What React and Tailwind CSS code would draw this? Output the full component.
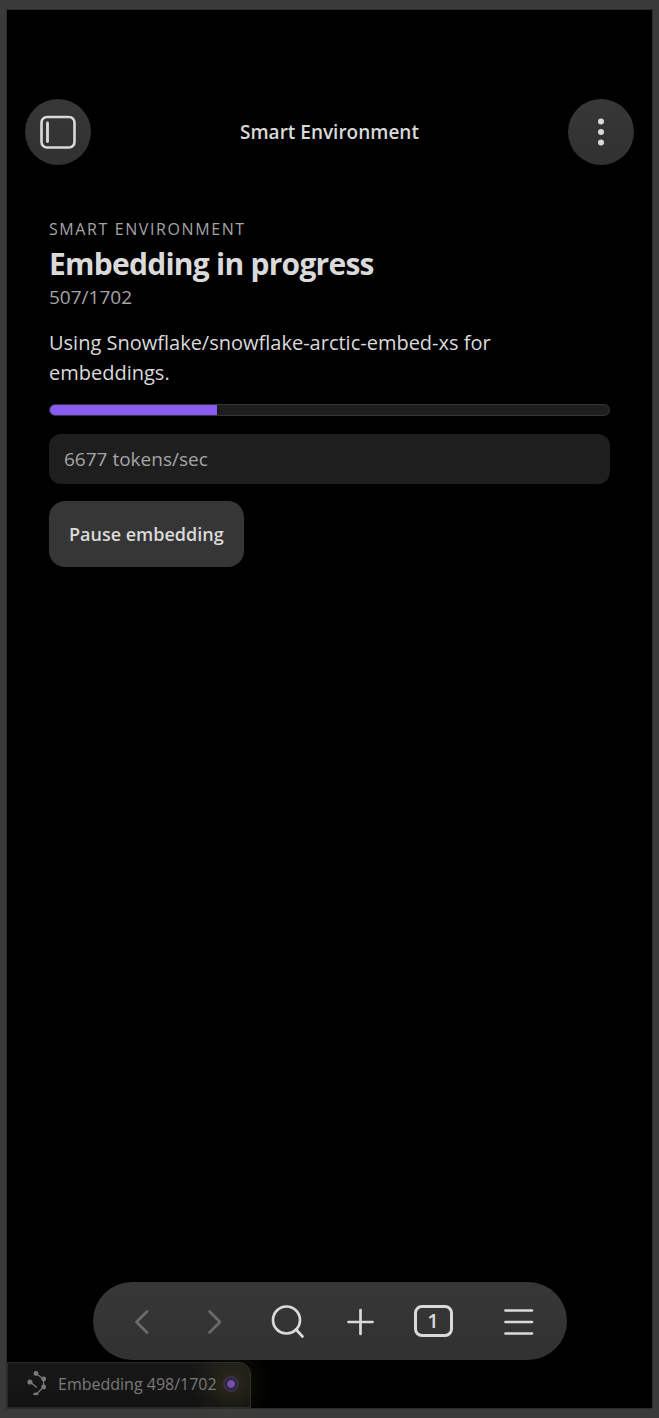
import React, { useState } from 'react';

const DONE = 507;
const TOTAL = 1702;

const SidebarIcon = () => (
    <svg width="36" height="34" viewBox="0 0 36 34" fill="none" stroke="currentColor" aria-hidden="true">
        <rect x="1.5" y="2" width="33" height="30.5" rx="5.5" strokeWidth="2.6" />
        <path d="M7.5 8v18.5" strokeWidth="2.8" strokeLinecap="round" />
    </svg>
);

const DotsIcon = () => (
    <svg width="6" height="28" viewBox="0 0 6 28" fill="currentColor" aria-hidden="true">
        <circle cx="3" cy="3.5" r="3" />
        <circle cx="3" cy="14" r="3" />
        <circle cx="3" cy="24.5" r="3" />
    </svg>
);

const GraphIcon = () => (
    <svg width="20" height="26" viewBox="0 0 20 26" fill="currentColor" stroke="currentColor" aria-hidden="true">
        <path d="M9 2.5 16.5 8v8L8.5 24M3 11l7 5.5" fill="none" strokeWidth="1.3" />
        <circle cx="9" cy="2.5" r="2.4" stroke="none" />
        <circle cx="16.7" cy="8" r="2.4" stroke="none" />
        <circle cx="3" cy="11" r="2.6" stroke="none" />
        <circle cx="16.7" cy="16" r="2.4" stroke="none" />
        <path d="M6.2 24a2.6 2.6 0 0 1 5.2 0z" stroke="none" />
    </svg>
);

const NavIcon = ({ children }) => (
    <svg width="40" height="40" viewBox="0 0 40 40" fill="none" stroke="currentColor" strokeWidth="2.7" strokeLinecap="round" strokeLinejoin="round" aria-hidden="true">
        {children}
    </svg>
);

const roundButton = 'flex size-[66px] items-center justify-center rounded-full bg-linear-to-b from-[#373737] to-[#313131]';
const navButton = 'flex w-[73px] items-center justify-center';

const App = () => {
    const [paused, setPaused] = useState(false);

    return (
        <div className="flex min-h-screen flex-col bg-[#3a3a3a] px-[7px] py-[10px] font-['Open_Sans','Noto_Sans',sans-serif] text-[#dadada]">
            <div className="flex flex-1 flex-col bg-black outline outline-[#2c2c2c]">
                <header className="flex items-center justify-between px-[18px] pt-[89px]">
                    <button type="button" aria-label="Toggle sidebar" className={roundButton}><SidebarIcon /></button>
                    <h1 className="text-[19px] font-semibold">Smart Environment</h1>
                    <button type="button" aria-label="More options" className={roundButton}><DotsIcon /></button>
                </header>

                <main className="flex flex-col px-[42px] pt-[53px]">
                    <p className="text-[16px] leading-[22px] tracking-widest text-[#a5a5a5] uppercase">Smart Environment</p>
                    <h2 className="text-[30px] leading-[48px] font-bold tracking-tight">Embedding in progress</h2>
                    <p className="text-[19px] leading-[18px] text-[#a5a5a5]">{DONE}/{TOTAL}</p>
                    <p className="mt-[22px] text-[20px] leading-[30px]">Using Snowflake/snowflake-arctic-embed-xs for embeddings.</p>
                    <div
                        role="progressbar"
                        aria-label="Embedding progress"
                        aria-valuenow={DONE}
                        aria-valuemax={TOTAL}
                        className="mt-4 h-3 overflow-hidden rounded-full border border-[#363636] bg-[#1e1e1e]"
                    >
                        <div className="h-full bg-[#8a5cf5]" style={{ width: `${(DONE / TOTAL) * 100}%` }} />
                    </div>
                    <p className="mt-[18px] rounded-xl bg-[#1e1e1e] px-[15px] py-[10px] text-[19px] leading-[30px] text-[#a5a5a5]">6677 tokens/sec</p>
                    <button
                        type="button"
                        onClick={() => setPaused(p => !p)}
                        className="mt-[17px] h-[66px] self-start rounded-2xl bg-[#363636] px-5 text-[18px] font-semibold"
                    >
                        {paused ? 'Resume embedding' : 'Pause embedding'}
                    </button>
                </main>

                <nav className="relative z-10 mx-auto mt-auto flex h-[78px] w-[474px] max-w-full rounded-full bg-linear-to-b from-[#373737] to-[#313131] pl-3">
                    <button type="button" aria-label="Back" className={`${navButton} text-[#6b6b6b]`} disabled>
                        <NavIcon><path d="M26 10.5 15.5 21 26 31.5" /></NavIcon>
                    </button>
                    <button type="button" aria-label="Forward" className={`${navButton} text-[#6b6b6b]`} disabled>
                        <NavIcon><path d="M15.5 10.5 26 21 15.5 31.5" /></NavIcon>
                    </button>
                    <button type="button" aria-label="Search" className={navButton}>
                        <NavIcon>
                            <circle cx="19.5" cy="19" r="13.5" />
                            <path d="M29 28.5 35.5 35.5" />
                        </NavIcon>
                    </button>
                    <button type="button" aria-label="New tab" className={navButton}>
                        <NavIcon><path d="M20.5 9v24M8.5 21h24" /></NavIcon>
                    </button>
                    <button type="button" aria-label="Tabs" className={navButton}>
                        <span className="flex h-8 w-[39px] items-center justify-center rounded-lg border-3 border-[#dadada] text-[20px] leading-none font-semibold">1</span>
                    </button>
                    <button type="button" aria-label="Menu" className="flex flex-1 items-center justify-center">
                        <NavIcon><path d="M7.5 9.5h26.5M7.5 21h26.5M7.5 32.5h26.5" /></NavIcon>
                    </button>
                </nav>

                <footer className="mt-[2px] flex h-[46px] items-center self-start rounded-tr-xl border border-[#2a2a2a] bg-linear-to-b from-[#191919] to-[#121212] pb-[2px] pr-[13px] pl-[19px] text-[#7a7a7a]">
                    <GraphIcon />
                    <span className="ml-[11px] text-[16px]">Embedding 498/1702</span>
                    <span className="ml-2 size-3 rounded-full border-2 border-[#2d2638] bg-[#7550ad] bg-clip-padding shadow-[0_0_0_2px_#3a2f4d,0_0_30px_12px_#77773355]" />
                </footer>
            </div>
        </div>
    );
};

export default App;
